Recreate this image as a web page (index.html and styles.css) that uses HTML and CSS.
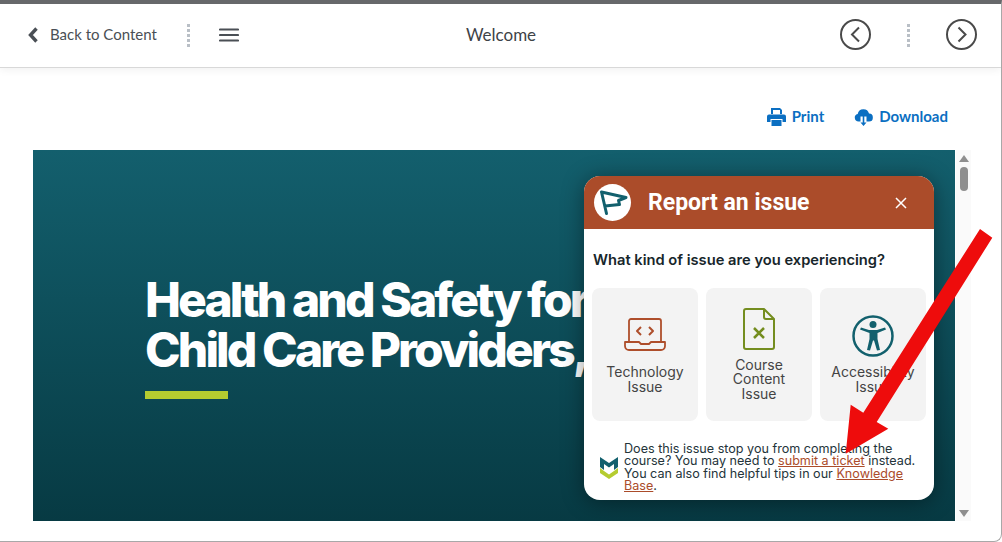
FILE: index.html
```html
<!DOCTYPE html>
<html lang="en">
<head>
  <meta charset="UTF-8" />
  <title>Welcome</title>
  <link rel="stylesheet" href="styles.css">
</head>
<body>
  <div class="window">
    <header class="topbar">
      <div class="topbar-left">
        <a class="back">
          <svg width="12" height="16" viewBox="0 0 12 16"><path d="M9.500 1.500 L3.500 8 L9.500 14.500" fill="none" stroke="#4a4f55" stroke-width="3.400"/></svg>
          <span>Back to Content</span>
        </a>
        <span class="dots"></span>
        <svg class="menu" width="20" height="14" viewBox="0 0 20 14"><path d="M1 1.500h18M1 7h18M1 12.500h18" stroke="#4a4f55" stroke-width="2.200" stroke-linecap="round"/></svg>
      </div>
      <div class="title">Welcome</div>
      <div class="topbar-right">
        <svg width="31" height="31" viewBox="0 0 31 31"><circle cx="15.500" cy="15.500" r="14.500" fill="none" stroke="#4a4a4a" stroke-width="2"/><path d="M19 8.500 L12 15.500 L19 22.500" fill="none" stroke="#4a4a4a" stroke-width="2"/></svg>
        <span class="dots"></span>
        <svg width="31" height="31" viewBox="0 0 31 31"><circle cx="15.500" cy="15.500" r="14.500" fill="none" stroke="#4a4a4a" stroke-width="2"/><path d="M12.500 8.500 L19.500 15.500 L12.500 22.500" fill="none" stroke="#4a4a4a" stroke-width="2"/></svg>
      </div>
    </header>

    <div class="tools">
      <a class="tool">
        <svg width="19" height="19" viewBox="0 0 19 19"><path fill="#0b6fc2" d="M4 1h9l2 2v4h-2V3H6v4H4zM2 7.500h15a2 2 0 0 1 2 2V15h-3.500v-3h-12v3H0V9.500a2 2 0 0 1 2-2zM4.500 13h10v6h-10z"/></svg>
        Print
      </a>
      <a class="tool">
        <svg width="19" height="19" viewBox="0 0 19 19"><path fill="#0b6fc2" d="M4.500 14.500a3.800 3.800 0 0 1-.8-7.500 5.800 5.800 0 0 1 11.300-.4 3.900 3.900 0 0 1-.2 7.900h-2.300v-5h-6v5z"/><path fill="#0b6fc2" d="M8.700 8.500h1.600v7h2.200l-3 3.500-3-3.500h2.200z"/></svg>
        Download
      </a>
    </div>

    <main class="stage">
      <section class="slide">
        <h1>Health and Safety for<br>Child Care Providers,</h1>
        <div class="accent"></div>
      </section>
      <div class="scrollbar">
        <span class="arrow-up"></span>
        <span class="thumb"></span>
        <span class="arrow-down"></span>
      </div>
    </main>

    <aside class="popup">
      <div class="popup-head">
        <span class="logo">
          <svg width="30" height="30" viewBox="0 0 30 30"><path d="M3.500 4 L8.500 25.500 M3.500 4 L28 9.500 L20.500 12.500 L21.500 16.500 L7 18" fill="none" stroke="#12606d" stroke-width="3" stroke-linejoin="round" stroke-linecap="round"/></svg>
        </span>
        <h2>Report an issue</h2>
        <svg class="close" width="12" height="12" viewBox="0 0 12 12"><path d="M1 1l10 10M11 1L1 11" stroke="#fff" stroke-width="1.500"/></svg>
      </div>
      <div class="popup-body">
        <p class="question">What kind of issue are you experiencing?</p>
        <div class="cards">
          <div class="card">
            <svg class="tech" width="42" height="34" viewBox="0 0 42 34"><g fill="none" stroke="#ae4e2b" stroke-width="1.800" stroke-linejoin="round"><path d="M5 23V3a2 2 0 0 1 2-2h28a2 2 0 0 1 2 2v20"/><path d="M1 24h14l2 2h8l2-2h14v4a4 4 0 0 1-4 4H5a4 4 0 0 1-4-4z"/><path d="M17 9l-4 4 4 4M25 9l4 4-4 4" stroke-width="2"/></g></svg>
            <span>Technology<br>Issue</span>
          </div>
          <div class="card">
            <svg class="doc" width="32" height="42" viewBox="0 0 32 42"><g fill="none" stroke="#748d1f" stroke-width="2" stroke-linejoin="round"><path d="M3 1h18l10 10v28a2 2 0 0 1-2 2H3a2 2 0 0 1-2-2V3a2 2 0 0 1 2-2z"/><path d="M21 1v8a2 2 0 0 0 2 2h8"/><path d="M11 20l10 10M21 20L11 30" stroke-width="2.500"/></g></svg>
            <span>Course<br>Content<br>Issue</span>
          </div>
          <div class="card">
            <svg class="access" width="42" height="42" viewBox="0 0 42 42"><circle cx="21" cy="21" r="19.500" fill="none" stroke="#12606d" stroke-width="2.500"/><circle cx="21" cy="9.500" r="3.500" fill="#12606d"/><path fill="#12606d" d="M8 14.500l1-2 8 2.500h8l8-2.500 1 2-8.500 3.500v6l2.500 11-3 .5-3-10h-1l-3 10-3-.5 2.500-11v-6z"/></svg>
            <span>Accessibility<br>Issue</span>
          </div>
        </div>
        <div class="note">
          <svg width="18" height="22" viewBox="0 0 18 22"><path fill="#12606d" d="M0 0l9 6 9-6v10l-4 3V7L9 10.500 4 7v6l-4-3z"/><path fill="#b5cc30" d="M0 11l4 3 5 3.500 5-3.500 4-3v5l-9 6-9-6z"/></svg>
          <p>Does this issue stop you from completing the course? You may need to <a>submit a ticket</a> instead. You can also find helpful tips in our <a>Knowledge Base</a>.</p>
        </div>
      </div>
    </aside>

    <svg class="red-arrow" width="160" height="260" viewBox="0 0 160 260"><path fill="#ee0c0c" d="M145 5 L157.300 13.700 L41.700 198 L53.300 204.700 L10.700 229.700 L15.700 180.700 L28.300 188.700 Z"/></svg>
  </div>
</body>
</html>
```

FILE: styles.css
```css
html, body {
  margin: 0;
  height: 100%;
  overflow: hidden;
}
body {
  background: #fff;
  font-family: 'Lato', sans-serif;
}
.window {
  position: relative;
  width: 1002px;
  height: 542px;
  box-sizing: border-box;
  border-top: 4px solid #67686b;
  border-right: 1px solid #a8a8a8;
  border-bottom: 1px solid #a8a8a8;
  border-bottom-right-radius: 8px;
  overflow: hidden;
}
.topbar {
  height: 63px;
  display: grid;
  grid-template-columns: 1fr auto 1fr;
  align-items: center;
  padding: 0 24px 0 27px;
  border-bottom: 1px solid #d8d8d8;
  box-shadow: 0 2px 8px rgba(0,0,0,0.06);
}
.topbar > * {
  margin-bottom: 2px;
}
.topbar-left, .topbar-right {
  display: flex;
  align-items: center;
}
.topbar-right {
  justify-content: flex-end;
  gap: 36px;
}
.back {
  display: flex;
  align-items: center;
  gap: 11px;
  font-size: 15px;
  color: #4a4f55;
}
.back span {
  margin-bottom: 2px;
}
.dots {
  width: 3px;
  height: 24px;
  background: radial-gradient(circle, #b9bfc6 1.5px, transparent 1.6px) 0 0 / 3px 5px;
}
.topbar-left .dots {
  margin: 0 29px 0 30px;
}
.title {
  font-size: 17px;
  color: #3e4347;
  margin-left: -2px;
}
.tools {
  height: 82px;
  box-sizing: border-box;
  padding: 39px 53px 0 0;
  display: flex;
  justify-content: flex-end;
  gap: 30px;
}
.tool {
  display: flex;
  align-items: flex-start;
  gap: 6px;
  font-size: 15px;
  font-weight: 700;
  color: #0b6fc2;
  line-height: 18px;
}
.stage {
  display: flex;
  padding-left: 33px;
}
.slide {
  width: 922px;
  height: 371px;
  box-sizing: border-box;
  padding: 125px 0 0 112px;
  background: linear-gradient(#135f6d, #073a43);
  overflow: hidden;
  white-space: nowrap;
}
.slide h1 {
  margin: 0;
  color: #fff;
  font-family: 'Inter', sans-serif;
  font-size: 48px;
  font-weight: 800;
  line-height: 50px;
  letter-spacing: -2.900px;
}
.accent {
  width: 83px;
  height: 8px;
  margin-top: 16px;
  background: #b5cc30;
}
.scrollbar {
  width: 15px;
  margin-left: 1px;
  height: 371px;
  background: #fafafa;
  display: flex;
  flex-direction: column;
  align-items: center;
}
.arrow-up, .arrow-down {
  width: 0;
  height: 0;
  border-left: 5px solid transparent;
  border-right: 5px solid transparent;
}
.arrow-up {
  margin-top: 5px;
  border-bottom: 7px solid #8f8f8f;
}
.arrow-down {
  margin-top: auto;
  margin-bottom: 4px;
  border-top: 7px solid #8f8f8f;
}
.thumb {
  width: 8px;
  height: 24px;
  margin-top: 5px;
  border-radius: 4px;
  background: #8f8f8f;
}
.popup {
  position: absolute;
  left: 584px;
  top: 172px;
  width: 350px;
  height: 324px;
  border-radius: 16px;
  background: #fff;
  overflow: hidden;
  box-shadow: 0 2px 22px rgba(0,0,0,0.4);
}
.popup-head {
  height: 53px;
  display: flex;
  align-items: center;
  padding: 0 27px 0 10px;
  background: #ab4c2a;
  color: #fff;
}
.logo {
  width: 37px;
  height: 37px;
  border-radius: 50%;
  background: #fff;
  display: flex;
  align-items: center;
  justify-content: center;
}
.popup-head h2 {
  margin: 0 0 0 17px;
  flex: 1;
  font-family: 'Roboto', sans-serif;
  font-size: 23px;
  font-weight: 700;
}
.popup-body {
  padding: 0 8px;
}
.question {
  margin: 23px 0 19px 1px;
  font-family: 'Inter', sans-serif;
  font-size: 14.700px;
  font-weight: 600;
  line-height: 17px;
  color: #17262b;
}
.cards {
  display: grid;
  grid-template-columns: repeat(3, 106px);
  gap: 8px;
}
.card {
  height: 133px;
  border-radius: 8px;
  background: #f3f3f3;
  display: flex;
  flex-direction: column;
  align-items: center;
  justify-content: center;
  gap: 8px;
  text-align: center;
  font-family: 'Inter', sans-serif;
  font-size: 14px;
  line-height: 14.500px;
  color: #444;
}
.tech {
  margin: 3px 0 5px;
}
.note {
  margin-top: 22px;
  padding-left: 8px;
  display: flex;
  align-items: center;
  gap: 6px;
}
.note svg {
  flex-shrink: 0;
}
.note p {
  width: 296px;
  margin: 0;
  font-family: 'Inter', sans-serif;
  font-size: 12.600px;
  line-height: 12.400px;
  color: #24343a;
}
.note a {
  color: #ab4c2a;
  text-decoration: underline;
}
.red-arrow {
  position: absolute;
  left: 835px;
  top: 220px;
}
```
